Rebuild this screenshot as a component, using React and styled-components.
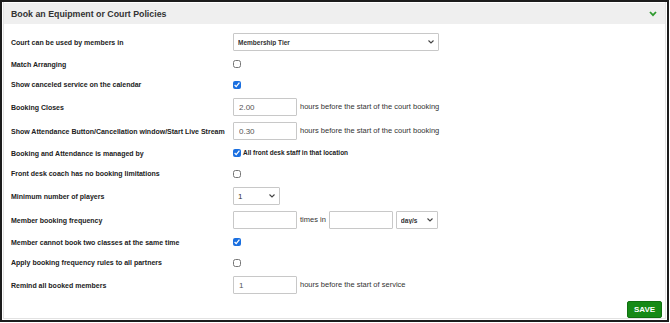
import React from 'react';
import styled, { createGlobalStyle } from 'styled-components';

const GlobalStyle = createGlobalStyle`
  html, body {
    margin: 0;
    padding: 0;
    background: #fff;
  }
  body {
    font-family: "Liberation Sans", Arial, sans-serif;
  }
`;

const chevron = color =>
  `url("data:image/svg+xml;utf8,<svg xmlns='http://www.w3.org/2000/svg' width='8' height='6' viewBox='0 0 8 6'><path d='M1.5 1.5 L4 4 L6.5 1.5' fill='none' stroke='${encodeURIComponent(
    color,
  )}' stroke-width='1.1'/></svg>")`;

const Frame = styled.div`
  box-sizing: border-box;
  width: 669px;
  height: 322px;
  border: 2px solid #1c1c1c;
  padding: 0 1px 1px 1px;
  display: flex;
`;

const Panel = styled.div`
  flex: 1;
  display: flex;
  flex-direction: column;
  border: 1px solid #e2e2e2;
  border-top: none;
`;

const Header = styled.div`
  height: 21px;
  margin-top: 1px;
  background: #efefef;
  display: flex;
  align-items: center;
  justify-content: space-between;
  padding: 0 8px 0 7px;
`;

const Title = styled.h2`
  margin: 0;
  font-size: 8.8px;
  font-weight: bold;
  color: #333;
`;

const Body = styled.div`
  flex: 1;
  padding: 6px 7px 0 7px;
`;

const Row = styled.div`
  display: flex;
  align-items: center;
  min-height: 14.5px;
  padding: 3px 0;
  line-height: 1;
`;

const Label = styled.div`
  width: 222px;
  flex-shrink: 0;
  font-size: 7px;
  font-weight: bold;
  color: #222;
`;

const Controls = styled.div`
  display: flex;
  align-items: center;
  gap: 3px;
`;

const Input = styled.input`
  box-sizing: border-box;
  width: ${p => p.w || 64}px;
  height: 18px;
  border: 1px solid #c8c8c8;
  border-radius: 1px;
  padding: 0 5px;
  font-family: inherit;
  font-size: 8px;
  color: #555;
  outline: none;
`;

const Select = styled.select`
  box-sizing: border-box;
  appearance: none;
  width: ${p => p.w}px;
  height: 18px;
  border: 1px solid #c8c8c8;
  border-radius: 1px;
  padding: 0 4px;
  font-family: inherit;
  font-size: ${p => (p.bold ? '6.5px' : '8px')};
  font-weight: ${p => (p.bold ? 'bold' : 'normal')};
  color: #333;
  background: #fff ${chevron('#444')} no-repeat right 3px center;
  outline: none;
`;

const Check = styled.input.attrs({ type: 'checkbox' })`
  width: 8px;
  height: 8px;
  margin: 0;
  accent-color: #1a6fe0;
`;

const Note = styled.span`
  font-size: 7.5px;
  color: #333;
`;

const CheckText = styled.span`
  font-size: 6.5px;
  font-weight: bold;
  color: #222;
  margin-left: -1px;
`;

const Footer = styled.div`
  display: flex;
  justify-content: flex-end;
  padding: 0 3px 0 0;
  height: 16px;
`;

const SaveButton = styled.button`
  width: 35px;
  height: 17px;
  background: #168a16;
  border: 1px solid #117011;
  border-radius: 2px;
  color: #fff;
  font-family: inherit;
  font-size: 8px;
  font-weight: bold;
  padding: 0;
  margin-top: -1px;
`;

const Chevron = () => (
  <svg width="8" height="6" viewBox="0 0 8 6">
    <path d="M1 1 L4 4.2 L7 1" fill="none" stroke="#2e9a2e" strokeWidth="1.8" />
  </svg>
);

export default function App() {
  return (
    <>
      <GlobalStyle />
      <Frame>
        <Panel>
          <Header>
            <Title>Book an Equipment or Court Policies</Title>
            <Chevron />
          </Header>
          <Body>
            <Row>
              <Label>Court can be used by members in</Label>
              <Controls>
                <Select w={206} bold defaultValue="tier">
                  <option value="tier">Membership Tier</option>
                </Select>
              </Controls>
            </Row>
            <Row>
              <Label>Match Arranging</Label>
              <Controls>
                <Check />
              </Controls>
            </Row>
            <Row>
              <Label>Show canceled service on the calendar</Label>
              <Controls>
                <Check defaultChecked />
              </Controls>
            </Row>
            <Row>
              <Label>Booking Closes</Label>
              <Controls>
                <Input defaultValue="2.00" />
                <Note>hours before the start of the court booking</Note>
              </Controls>
            </Row>
            <Row>
              <Label>Show Attendance Button/Cancellation window/Start Live Stream</Label>
              <Controls>
                <Input defaultValue="0.30" />
                <Note>hours before the start of the court booking</Note>
              </Controls>
            </Row>
            <Row>
              <Label>Booking and Attendance is managed by</Label>
              <Controls>
                <Check defaultChecked />
                <CheckText>All front desk staff in that location</CheckText>
              </Controls>
            </Row>
            <Row>
              <Label>Front desk coach has no booking limitations</Label>
              <Controls>
                <Check />
              </Controls>
            </Row>
            <Row>
              <Label>Minimum number of players</Label>
              <Controls>
                <Select w={47} defaultValue="1">
                  <option value="1">1</option>
                </Select>
              </Controls>
            </Row>
            <Row>
              <Label>Member booking frequency</Label>
              <Controls>
                <Input />
                <Note>times in</Note>
                <Input />
                <Select w={42} bold defaultValue="days">
                  <option value="days">day/s</option>
                </Select>
              </Controls>
            </Row>
            <Row>
              <Label>Member cannot book two classes at the same time</Label>
              <Controls>
                <Check defaultChecked />
              </Controls>
            </Row>
            <Row>
              <Label>Apply booking frequency rules to all partners</Label>
              <Controls>
                <Check />
              </Controls>
            </Row>
            <Row>
              <Label>Remind all booked members</Label>
              <Controls>
                <Input defaultValue="1" />
                <Note>hours before the start of service</Note>
              </Controls>
            </Row>
          </Body>
          <Footer>
            <SaveButton>SAVE</SaveButton>
          </Footer>
        </Panel>
      </Frame>
    </>
  );
}
